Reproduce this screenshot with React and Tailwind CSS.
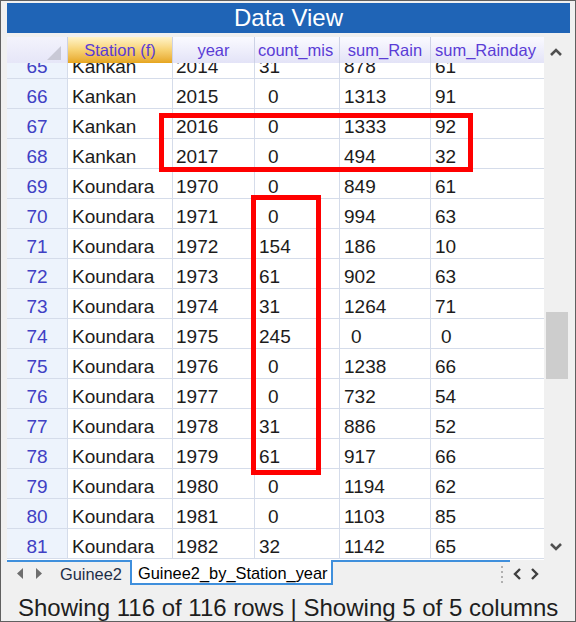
import React from "react";

const rows = [
  [65, "Kankan", "2014", "31", "878", "61"],
  [66, "Kankan", "2015", "0", "1313", "91"],
  [67, "Kankan", "2016", "0", "1333", "92"],
  [68, "Kankan", "2017", "0", "494", "32"],
  [69, "Koundara", "1970", "0", "849", "61"],
  [70, "Koundara", "1971", "0", "994", "63"],
  [71, "Koundara", "1972", "154", "186", "10"],
  [72, "Koundara", "1973", "61", "902", "63"],
  [73, "Koundara", "1974", "31", "1264", "71"],
  [74, "Koundara", "1975", "245", "0", "0"],
  [75, "Koundara", "1976", "0", "1238", "66"],
  [76, "Koundara", "1977", "0", "732", "54"],
  [77, "Koundara", "1978", "31", "886", "52"],
  [78, "Koundara", "1979", "61", "917", "66"],
  [79, "Koundara", "1980", "0", "1194", "62"],
  [80, "Koundara", "1981", "0", "1103", "85"],
  [81, "Koundara", "1982", "32", "1142", "65"],
];

const font = { fontFamily: '"Liberation Sans", Arial, sans-serif' };

function Row({ r, first }) {
  const [n, st, yr, cm, rain, rd] = r;
  return (
    <div
      className={`flex h-[30px] shrink-0 border-b border-[#d5dcea] text-[19px] leading-[30px] text-[#1c1c1c] ${
        first ? "-mt-[14px]" : ""
      }`}
    >
      <div className="w-[61px] shrink-0 bg-[#edf3fc] text-center text-[#4040c4] border-r border-[#d5dcea] pt-[3px]">
        {n}
      </div>
      <div className="w-[105px] shrink-0 border-r border-[#d5dcea] pl-[4px] pt-[3px]">{st}</div>
      <div className="w-[82px] shrink-0 border-r border-[#d5dcea] pl-[3px] pt-[3px]">{yr}</div>
      <div
        className={`w-[85px] shrink-0 border-r border-[#d5dcea] pt-[3px] ${
          cm.length === 1 ? "pl-[13px]" : "pl-[4px]"
        }`}
      >
        {cm}
      </div>
      <div
        className={`w-[91px] shrink-0 border-r border-[#d5dcea] pt-[3px] ${
          rain.length === 1 ? "pl-[11px]" : "pl-[4px]"
        }`}
      >
        {rain}
      </div>
      <div
        className={`w-[113px] shrink-0 pt-[3px] ${
          rd.length === 1 ? "pl-[10px]" : "pl-[4px]"
        }`}
      >
        {rd}
      </div>
    </div>
  );
}

function Header() {
  const hc =
    "shrink-0 h-full flex items-center justify-center border-r border-[#cdd2e6] bg-gradient-to-b from-[#fafaff] to-[#e3e3f7] text-[#5a3cd6] text-[16.5px] pt-[1px]";
  return (
    <div className="flex h-[26px] shrink-0 relative z-10">
      <div className="w-[61px] shrink-0 h-full relative border-r border-[#cdd2e6] bg-gradient-to-b from-[#f3f3fc] to-[#e6e6f8]">
        <svg className="absolute right-[6px] bottom-[3px]" width="14" height="14" viewBox="0 0 14 14">
          <polygon points="14,0 14,14 0,14" fill="#c9c9d6" />
        </svg>
      </div>
      <div className="w-[105px] shrink-0 h-full flex items-center justify-center border-r border-[#cdd2e6] bg-gradient-to-b from-[#fff3c8] via-[#f7d272] to-[#e6a61c] text-[#5a3cd6] text-[16.5px] pt-[1px]">
        Station (f)
      </div>
      <div className={`w-[82px] ${hc}`}>year</div>
      <div className={`w-[85px] ${hc} justify-start pl-[3px]`}>count_mis</div>
      <div className={`w-[91px] ${hc}`}>sum_Rain</div>
      <div className={`w-[113px] ${hc} justify-start pl-[4px] border-r-0`}>sum_Rainday</div>
    </div>
  );
}

export default function App() {
  return (
    <div
      style={font}
      className="relative w-[576px] h-[622px] overflow-hidden bg-[#f0f0f0] border border-[#606060] flex flex-col pl-[6px] pr-[5px] pt-[2px]"
    >
      <div className="h-[30px] shrink-0 bg-[#1f64b6] text-white text-[24px] leading-[30px] text-center">
        Data View
      </div>
      <div className="h-[4px] shrink-0" />
      <div className="flex h-[523px] shrink-0">
        <div className="w-[537px] shrink-0 flex flex-col bg-white">
          <Header />
          <div className="flex-1 overflow-hidden flex flex-col">
            {rows.map((r, i) => (
              <Row key={r[0]} r={r} first={i === 0} />
            ))}
          </div>
        </div>
        <div className="w-[26px] shrink-0 bg-[#f0f0f0] relative">
          <svg className="absolute left-[5px] top-[10px]" width="14" height="10" viewBox="0 0 14 10">
            <polyline points="2,8 7,3 12,8" fill="none" stroke="#505050" strokeWidth="2.6" />
          </svg>
          <div className="absolute left-[2px] top-[275px] w-[22px] h-[67px] bg-[#cdcdcd]" />
          <svg className="absolute left-[5px] top-[505px]" width="14" height="10" viewBox="0 0 14 10">
            <polyline points="2,2 7,7 12,2" fill="none" stroke="#505050" strokeWidth="2.6" />
          </svg>
        </div>
      </div>
      <div className="h-[25px] shrink-0 flex items-stretch border-t-2 border-[#3f8fdc] mr-[60px] relative">
        <div className="flex items-center gap-[13px] pl-[10px] pr-[0px] w-[50px]">
          <svg width="6" height="11" viewBox="0 0 6 11">
            <polygon points="6,0 6,11 0,5.5" fill="#6e6e6e" />
          </svg>
          <svg width="6" height="11" viewBox="0 0 6 11">
            <polygon points="0,0 0,11 6,5.5" fill="#6e6e6e" />
          </svg>
        </div>
        <div className="flex items-center pl-[3px] w-[73px] text-[16.4px] text-[#1e2e48] pt-[1px]">Guinee2</div>
        <div className="flex items-center pl-[6px] pr-[3px] bg-white border-x-2 border-b-2 border-[#3f8fdc] -mt-[2px] pt-[3px] text-[16.4px] text-black h-[25px]">
          Guinee2_by_Station_year
        </div>
      </div>
      <div className="absolute left-[500px] top-[565px] flex flex-col gap-[3px]">
        <div className="w-[2px] h-[2px] bg-[#b0b0b0]" />
        <div className="w-[2px] h-[2px] bg-[#b0b0b0]" />
        <div className="w-[2px] h-[2px] bg-[#b0b0b0]" />
        <div className="w-[2px] h-[2px] bg-[#b0b0b0]" />
      </div>
      <div className="absolute left-[512px] top-[567px] flex gap-[8px]">
        <svg width="9" height="12" viewBox="0 0 9 12">
          <polyline points="7,1 2,6 7,11" fill="none" stroke="#404040" strokeWidth="2.4" />
        </svg>
        <svg width="9" height="12" viewBox="0 0 9 12">
          <polyline points="2,1 7,6 2,11" fill="none" stroke="#404040" strokeWidth="2.4" />
        </svg>
      </div>
      <div className="flex-1 flex items-center pl-[11px] pt-[5px] text-[24px] text-[#1e1e1e] whitespace-nowrap">
        Showing 116 of 116 rows | Showing 5 of 5 columns
      </div>
      <div className="absolute left-[158px] top-[112px] w-[314px] h-[59px] border-[5px] border-[#ff0000] pointer-events-none" />
      <div className="absolute left-[250px] top-[194px] w-[70px] h-[280px] border-[5px] border-[#ff0000] pointer-events-none" />
    </div>
  );
}
